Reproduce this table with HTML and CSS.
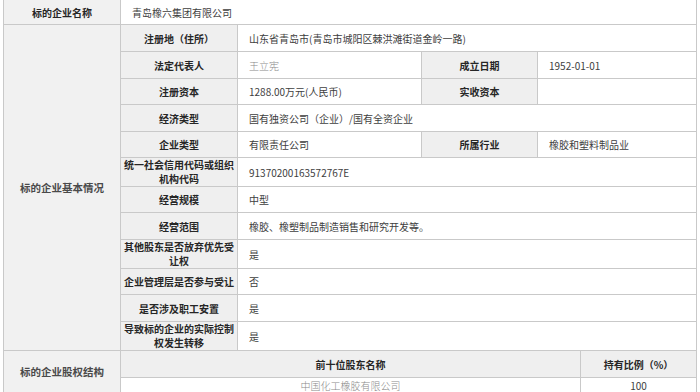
FILE: index.html
```html
<!DOCTYPE html>
<html lang="zh-CN">
<head>
<meta charset="utf-8">
<title>标的企业信息</title>
<link rel="stylesheet" href="styles.css">
</head>
<body>
<table class="info">
  <colgroup>
    <col class="c0"><col class="c1"><col class="c2"><col class="c3"><col class="c4a"><col class="c4b">
  </colgroup>
  <tbody>
    <tr class="h25">
      <td class="side strong">标的企业名称</td>
      <td class="val" colspan="5">青岛橡六集团有限公司</td>
    </tr>
    <tr class="h27">
      <td class="side" rowspan="12">标的企业基本情况</td>
      <td class="lab">注册地（住所）</td>
      <td class="val" colspan="4">山东省青岛市(青岛市城阳区棘洪滩街道金岭一路)</td>
    </tr>
    <tr class="h27">
      <td class="lab">法定代表人</td>
      <td class="val serif">王立宪</td>
      <td class="lab">成立日期</td>
      <td class="val" colspan="2">1952-01-01</td>
    </tr>
    <tr class="h26">
      <td class="lab">注册资本</td>
      <td class="val">1288.00万元(人民币)</td>
      <td class="lab">实收资本</td>
      <td class="val" colspan="2"></td>
    </tr>
    <tr class="h27">
      <td class="lab">经济类型</td>
      <td class="val" colspan="4">国有独资公司（企业）/国有全资企业</td>
    </tr>
    <tr class="h26">
      <td class="lab">企业类型</td>
      <td class="val">有限责任公司</td>
      <td class="lab">所属行业</td>
      <td class="val" colspan="2">橡胶和塑料制品业</td>
    </tr>
    <tr class="h28">
      <td class="lab two">统一社会信用代码或组织<br>机构代码</td>
      <td class="val" colspan="4">91370200163572767E</td>
    </tr>
    <tr class="h26">
      <td class="lab">经营规模</td>
      <td class="val" colspan="4">中型</td>
    </tr>
    <tr class="h27">
      <td class="lab">经营范围</td>
      <td class="val" colspan="4">橡胶、橡塑制品制造销售和研究开发等。</td>
    </tr>
    <tr class="h29">
      <td class="lab two">其他股东是否放弃优先受<br>让权</td>
      <td class="val" colspan="4">是</td>
    </tr>
    <tr class="h26">
      <td class="lab">企业管理层是否参与受让</td>
      <td class="val" colspan="4">否</td>
    </tr>
    <tr class="h27">
      <td class="lab">是否涉及职工安置</td>
      <td class="val" colspan="4">是</td>
    </tr>
    <tr class="h28">
      <td class="lab two">导致标的企业的实际控制<br>权发生转移</td>
      <td class="val" colspan="4">是</td>
    </tr>
    <tr class="h27">
      <td class="side" rowspan="2">标的企业股权结构</td>
      <td class="lab" colspan="4">前十位股东名称</td>
      <td class="lab">持有比例（%）</td>
    </tr>
    <tr class="h15">
      <td class="cell-center serif" colspan="4">中国化工橡胶有限公司</td>
      <td class="cell-center num">100</td>
    </tr>
  </tbody>
</table>
</body>
</html>
```

FILE: styles.css
```css
html, body {
  margin: 0;
  padding: 0;
  background: #ffffff;
}

body {
  font-family: "Noto Sans CJK SC", "Noto Sans", sans-serif;
  font-size: 10px;
  color: #444;
}

.info {
  margin-left: 3px;
  width: 694px;
  table-layout: fixed;
  border-collapse: separate;
  border-spacing: 0;
  border-left: 1px solid #c9c9c9;
}

.c0 { width: 117px; }
.c1 { width: 117px; }
.c2 { width: 184px; }
.c3 { width: 116px; }
.c4a { width: 43px; }
.c4b { width: 116px; }

.info td {
  border-right: 1px solid #c9c9c9;
  border-bottom: 1px solid #c9c9c9;
  padding: 0 2px;
  line-height: 13px;
  vertical-align: middle;
  white-space: nowrap;
  overflow: hidden;
  box-sizing: border-box;
}

.info td.two {
  line-height: 14px;
  padding-top: 0;
  padding-bottom: 0;
}

.h25 { height: 25px; }
.h26 { height: 26px; }
.h27 { height: 27px; }
.h28 { height: 28px; }
.h29 { height: 29px; }
.h15 { height: 15px; }

.info td.side {
  background: #f1f1f1;
  text-align: center;
  font-size: 10.5px;
  font-weight: 700;
  color: #4a4a4a;
}

.info td.side.strong {
  font-size: 10px;
  color: #262626;
}

.info td.lab {
  background: #efefef;
  text-align: center;
  font-weight: 700;
  color: #262626;
}

.info td.val {
  padding-left: 11px;
  text-align: left;
  color: #3e3e3e;
}

.info td.serif {
  color: #8a8a8a;
  font-weight: 300;
}

.info td.cell-center {
  text-align: center;
  line-height: 13px;
  padding-top: 1px;
}

.info td.num {
  color: #3e3e3e;
}
```
